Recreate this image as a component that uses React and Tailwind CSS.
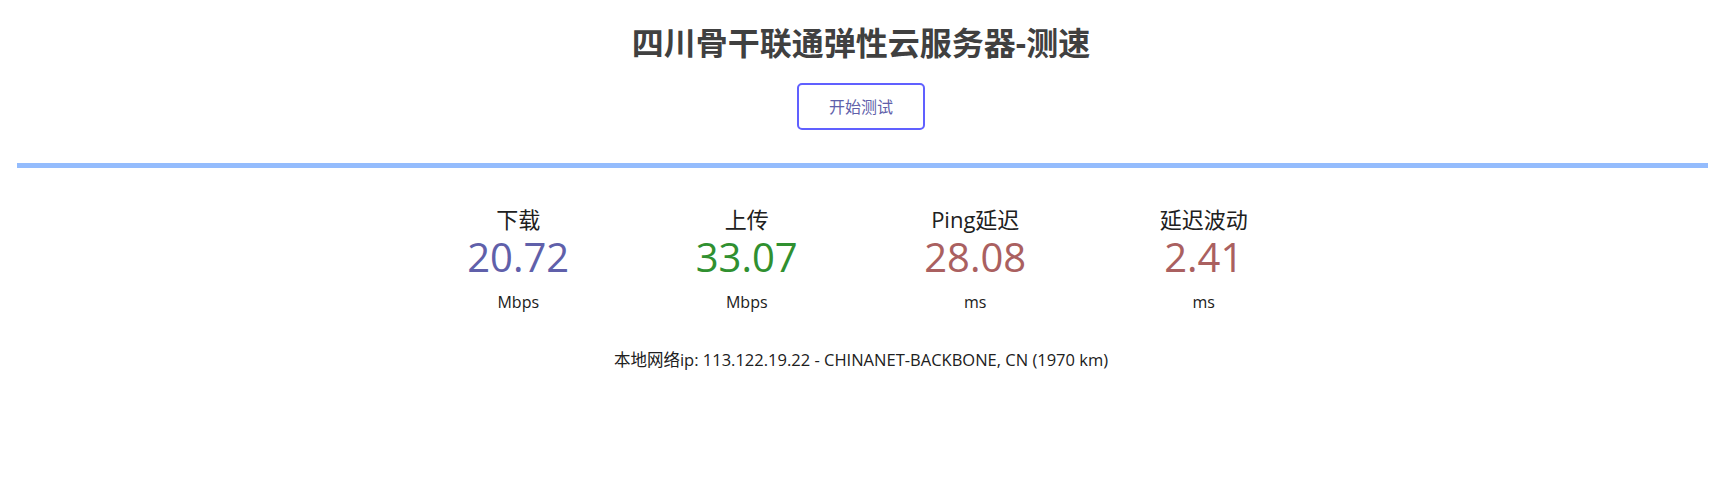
import React from 'react';

const stats = [
    { name: '下载', value: '20.72', unit: 'Mbps', color: 'text-[#6060aa]' },
    { name: '上传', value: '33.07', unit: 'Mbps', color: 'text-[#309030]' },
    { name: 'Ping延迟', value: '28.08', unit: 'ms', color: 'text-[#aa6060]' },
    { name: '延迟波动', value: '2.41', unit: 'ms', color: 'text-[#aa6060]' },
];

const App = () => {
    return (
        <div className="min-h-[478px] bg-white text-[#202020] text-center font-['Open_Sans','Noto_Sans_CJK_SC',sans-serif]">
            <h1 className="pt-[24px] text-[32px] leading-[38px] font-bold text-[#404040]">
                四川骨干联通弹性云服务器-测速
            </h1>
            <div className="mt-[21px] flex justify-center">
                <button className="w-[128px] h-[47px] border-2 border-[#6060ff] rounded-[5px] text-[16px] text-[#6060aa]">
                    开始测试
                </button>
            </div>
            <div className="mt-[33px] ml-[17px] mr-[14px] h-[5px] bg-[#94bcfd]"></div>
            <div className="mt-[37px] mx-auto w-[914px] grid grid-cols-4">
                {stats.map(s => (
                    <div key={s.name} className="flex flex-col items-center">
                        <div className="text-[22px] leading-[28px]">{s.name}</div>
                        <div className={`text-[40px] leading-[48px] ${s.color}`}>{s.value}</div>
                        <div className="mt-[11px] text-[16px] leading-[20px]">{s.unit}</div>
                    </div>
                ))}
            </div>
            <div className="mt-[37px] text-[16.5px] leading-[22px]">
                本地网络ip: 113.122.19.22 - CHINANET-BACKBONE, CN (1970 km)
            </div>
        </div>
    );
};

export default App;
